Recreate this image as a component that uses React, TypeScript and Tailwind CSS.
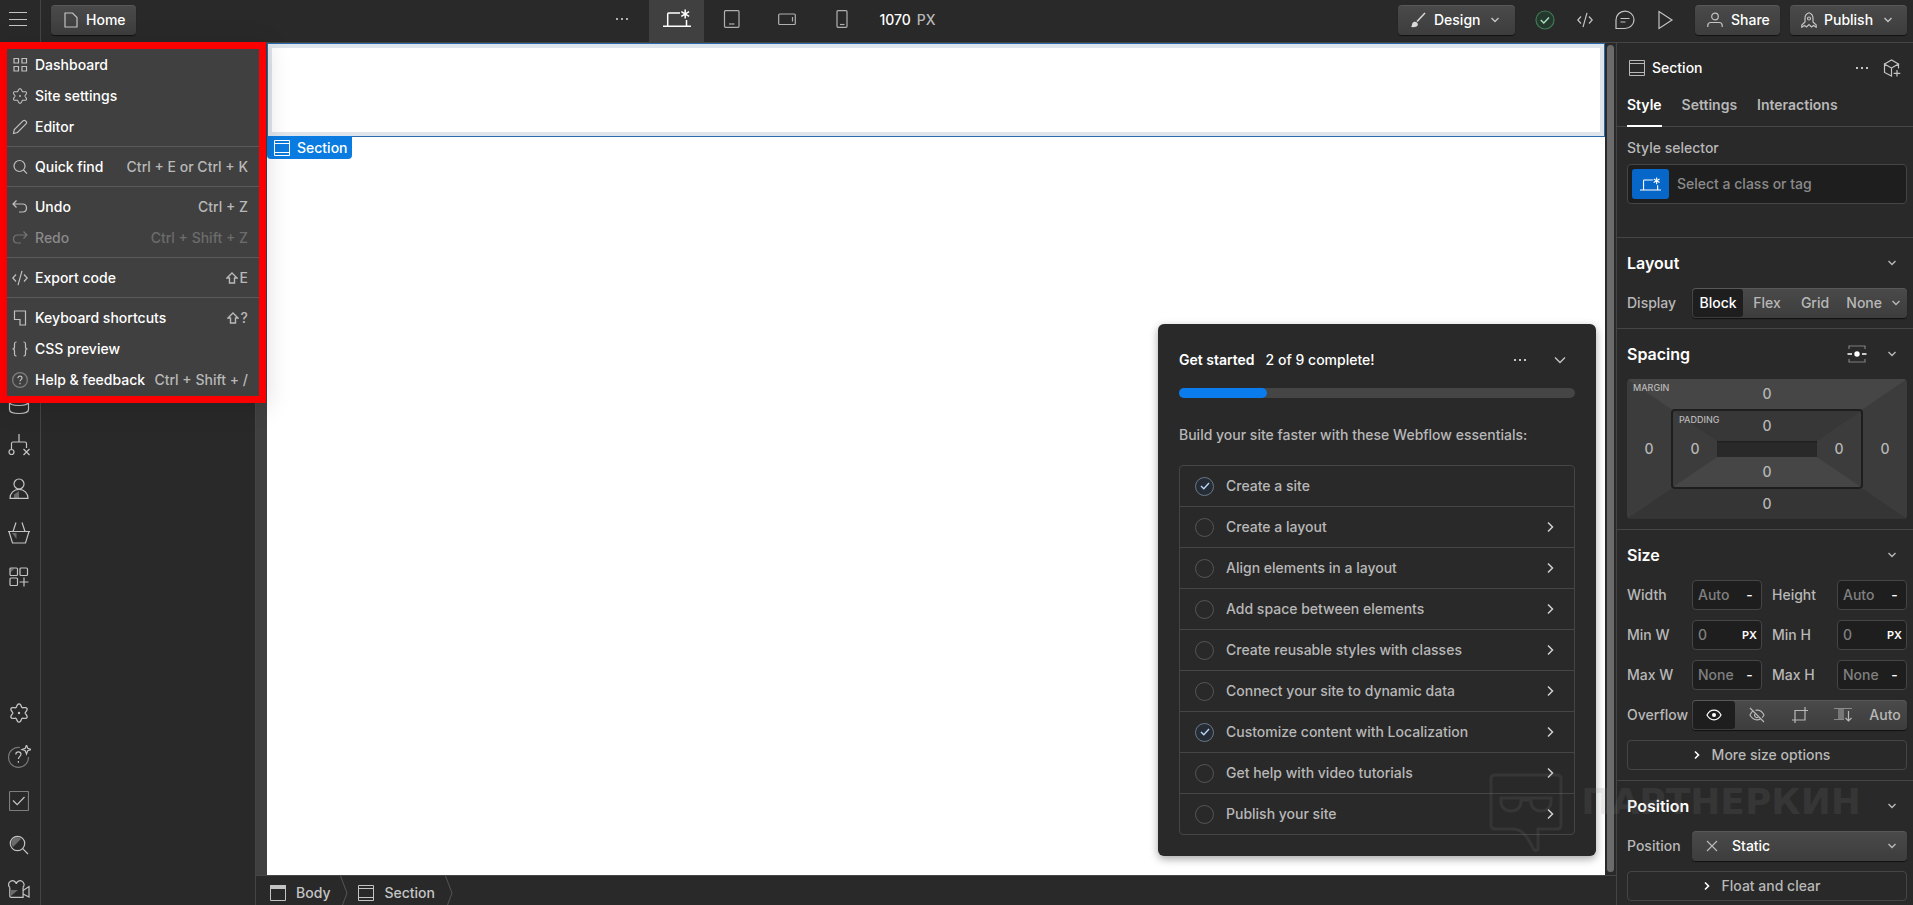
import React from "react";
import { clsx } from "clsx";

type IconProps = {
  size?: number;
  className?: string;
  children: React.ReactNode;
};

function Icon({ size = 16, className, children }: IconProps) {
  return (
    <svg
      width={size}
      height={size}
      viewBox={`0 0 ${size} ${size}`}
      fill="none"
      stroke="currentColor"
      strokeWidth="1.2"
      className={clsx("shrink-0", className)}
      aria-hidden="true"
    >
      {children}
    </svg>
  );
}

/* ---------- Icons ---------- */

const Chevron = ({ className }: { className?: string }) => (
  <Icon size={10} className={className}>
    <path d="M1.5 3 5 6.5 8.5 3" strokeWidth="1.4" />
  </Icon>
);

const ChevronRight = ({ className }: { className?: string }) => (
  <Icon size={10} className={className}>
    <path d="M3 1.5 6.5 5 3 8.5" strokeWidth="1.6" />
  </Icon>
);

const Dots = () => (
  <Icon>
    <g fill="currentColor" stroke="none">
      <rect x="2" y="7" width="2" height="2" />
      <rect x="7" y="7" width="2" height="2" />
      <rect x="12" y="7" width="2" height="2" />
    </g>
  </Icon>
);

const SectionIcon = ({ className }: { className?: string }) => (
  <Icon className={className}>
    <path d="M.5.5h15v15H.5zM.5 3.5h15M.5 12.5h15" strokeWidth="1" />
  </Icon>
);

const BodyIcon = () => (
  <Icon>
    <path d="M.5.5h15v15H.5z" strokeWidth="1" />
    <path d="M0 0h16v4H0z" fill="currentColor" stroke="none" />
  </Icon>
);

// Six rounded teeth on a 20x20 grid
const gearPoints = Array.from({ length: 72 }, (_, i) => {
  const angle = (i / 72) * Math.PI * 2;
  const r = 7.7 + 1.5 * Math.cos(6 * angle);
  return `${(10 + r * Math.sin(angle)).toFixed(2)},${(10 - r * Math.cos(angle)).toFixed(2)}`;
}).join(" ");

const GearIcon = ({ size = 16 }: { size?: number }) => (
  <svg
    width={size}
    height={size}
    viewBox="0 0 20 20"
    fill="none"
    stroke="currentColor"
    strokeWidth="1.3"
    className="shrink-0"
    aria-hidden="true"
  >
    <polygon points={gearPoints} strokeLinejoin="round" />
    <circle cx="10" cy="10" r="1.2" fill="currentColor" stroke="none" />
  </svg>
);

const CodeIcon = () => (
  <Icon>
    <path d="M4 4.5.8 8 4 11.5M12 4.5 15.2 8 12 11.5M10 .8 6 15.2" />
  </Icon>
);

const DesktopStar = ({ className }: { className?: string }) => (
  <svg
    width="28"
    height="20"
    viewBox="0 0 28 20"
    fill="none"
    stroke="currentColor"
    strokeWidth="1.5"
    className={clsx("shrink-0", className)}
    aria-hidden="true"
  >
    <path d="M0 17.3h28M4.7 17V5c0-.6.4-1 1-1H17M23.5 11v6" />
    <path d="M22.2.5v9M18.3 2.7l7.8 4.6M26.1 2.7l-7.8 4.6" />
  </svg>
);

/* ---------- Top bar ---------- */

const raised =
  "rounded-[4px] bg-linear-to-b from-[#4a4a4a] to-[#3d3d3d] shadow-[0_1px_1px_rgba(0,0,0,0.6),inset_0_1px_0_rgba(255,255,255,0.08)]";

function DeviceButton({
  label,
  active,
  children,
}: {
  label: string;
  active?: boolean;
  children: React.ReactNode;
}) {
  return (
    <button
      aria-label={label}
      className={clsx(
        "flex h-full w-[55px] items-center justify-center pb-1",
        active ? "bg-[#404040] text-white" : "text-[#b0b0b0]"
      )}
    >
      {children}
    </button>
  );
}

function ToolButton({
  label,
  children,
}: {
  label: string;
  children: React.ReactNode;
}) {
  return (
    <button
      aria-label={label}
      className="flex h-[30px] w-10 items-center justify-center text-[#c4c4c4]"
    >
      {children}
    </button>
  );
}

function TopBar() {
  return (
    <header className="flex h-[43px] shrink-0 border-b border-[#454545] bg-[#292929]">
      <div className="flex items-start">
        <button
          aria-label="Main menu"
          className="flex h-full w-[41px] items-center border-r border-[#454545] pb-1 pl-[9px] text-[#c4c4c4]"
        >
          <Icon size={18}>
            <path d="M0 2.5h18M0 9.5h18M0 15.5h18" strokeWidth="1" />
          </Icon>
        </button>
        <button
          className={clsx(
            "mt-[5px] ml-[10px] flex h-[30px] w-[85px] items-center gap-[7px] pl-3 text-white",
            raised
          )}
        >
          <Icon className="text-[#c4c4c4]">
            <path d="M2 1h7.5L14 5.5V15H2z" />
          </Icon>
          Home
        </button>
      </div>

      <div className="flex flex-1 items-start justify-center pr-1">
        <DeviceButton label="More breakpoints">
          <Dots />
        </DeviceButton>
        <DeviceButton label="Desktop" active>
          <DesktopStar />
        </DeviceButton>
        <DeviceButton label="Tablet">
          <Icon size={18}>
            <rect x="1.5" y=".7" width="14.5" height="16.6" rx="1" />
            <path d="M6 14h5.5" />
          </Icon>
        </DeviceButton>
        <DeviceButton label="Mobile landscape">
          <Icon size={18}>
            <rect x=".7" y="4" width="16.6" height="10.5" rx="1" />
            <path d="M14.5 7v4.5" />
          </Icon>
        </DeviceButton>
        <DeviceButton label="Mobile portrait">
          <Icon size={18}>
            <rect x="4" y=".7" width="10" height="16.6" rx="1" />
            <path d="M7 14.5h4.5" />
          </Icon>
        </DeviceButton>
        <span className="flex h-10 items-center gap-1.5 pl-[10px] text-white">
          1070 <span className="text-[#b8b8b8]">PX</span>
        </span>
      </div>

      <div className="flex items-start gap-[10px] pt-[5px] pr-1.5">
        <button
          className={clsx(
            "flex h-[30px] w-[117px] items-center pl-3 text-white",
            raised
          )}
        >
          <Icon className="mr-2 text-[#d9d9d9]">
            <path d="M15 1 7 9.5" strokeWidth="1.5" />
            <path
              d="M1 15c1-1 .8-2 1.3-3.5C3 9.5 5.5 9 7 10.5s1 3.7-1 4.3c-1.5.4-3.5.4-5 .2z"
              fill="currentColor"
              stroke="none"
            />
          </Icon>
          Design
          <Chevron className="mr-[15px] ml-auto text-[#c4c4c4]" />
        </button>
        <div className="flex">
          <ToolButton label="Status">
            <Icon size={20}>
              <circle cx="10" cy="10" r="9" stroke="#3f7a55" fill="#25382d" />
              <path d="m5.8 10 3 3 5.2-5.5" stroke="#a6e3be" strokeWidth="1.4" />
            </Icon>
          </ToolButton>
          <ToolButton label="Code">
            <CodeIcon />
          </ToolButton>
          <ToolButton label="Comments">
            <Icon size={20}>
              <path d="M1 18.5V10a9 8.7 0 1 1 9 8.5z" />
              <path d="M5.5 8.5h9M5.5 12h5" />
            </Icon>
          </ToolButton>
          <ToolButton label="Preview">
            <Icon size={20}>
              <path d="M4 1.5v17L17 10z" />
            </Icon>
          </ToolButton>
        </div>
        <button
          className={clsx(
            "flex h-[30px] w-[85px] items-center gap-2 pl-3 text-white",
            raised
          )}
        >
          <Icon className="text-[#c4c4c4]">
            <circle cx="8" cy="4.5" r="3.3" />
            <path d="M.8 15v-1.5c0-1.7 1.3-3 3-3h8.4c1.7 0 3 1.3 3 3V15" />
          </Icon>
          Share
        </button>
        <button
          className={clsx(
            "flex h-[30px] w-[117px] items-center pl-[11px] text-white",
            raised
          )}
        >
          <Icon className="mr-[7px] text-[#c4c4c4]">
            <path d="M4 10V6.5C4 3.8 6 1.5 8 .8c2 .7 4 3 4 5.7V10l3.2 3v2.2l-2.7-1.7-2 1.5L8 12.5 5.5 15l-2-1.5L.8 15.2V13z" />
            <circle cx="8" cy="6.5" r="1.5" />
          </Icon>
          Publish
          <Chevron className="mr-[14px] ml-auto text-[#c4c4c4]" />
        </button>
      </div>
    </header>
  );
}

/* ---------- Main menu ---------- */

type MenuEntry = {
  label: string;
  keys?: string;
  shift?: boolean;
  disabled?: boolean;
  icon: React.ReactNode;
};

const menuGroups: MenuEntry[][] = [
  [
    {
      label: "Dashboard",
      icon: (
        <Icon>
          <path d="M2 1.5h4.5V6H2zM10 1.5h4.5V6H10zM2 9.5h4.5V14H2zM10 9.5h4.5V14H10z" />
        </Icon>
      ),
    },
    { label: "Site settings", icon: <GearIcon /> },
    {
      label: "Editor",
      icon: (
        <Icon>
          <path d="m1.5 14.5.8-4L11 1.8c.7-.7 1.8-.7 2.5 0l.5.5c.7.7.7 1.8 0 2.5l-8.5 8.7z" />
        </Icon>
      ),
    },
  ],
  [
    {
      label: "Quick find",
      keys: "Ctrl + E or Ctrl + K",
      icon: (
        <Icon>
          <circle cx="7.5" cy="7" r="5.5" />
          <path d="m11.500 11 3.500 3.700" />
        </Icon>
      ),
    },
  ],
  [
    {
      label: "Undo",
      keys: "Ctrl + Z",
      icon: (
        <Icon>
          <path d="M4.5 1.5 1 5l3.5 3.5M1 5h9.500c2.500 0 4 1.500 4 4s-1.500 4-4 4H7" />
        </Icon>
      ),
    },
    {
      label: "Redo",
      keys: "Ctrl + Shift + Z",
      disabled: true,
      icon: (
        <Icon>
          <path d="M11.5 1.5 15 5l-3.5 3.5M15 5H5.5c-2.500 0-4 1.500-4 4s1.500 4 4 4H9" />
        </Icon>
      ),
    },
  ],
  [{ label: "Export code", keys: "E", shift: true, icon: <CodeIcon /> }],
  [
    {
      label: "Keyboard shortcuts",
      keys: "?",
      shift: true,
      icon: (
        <Icon>
          <path d="M2.5 1h11v14H8V9.500H2.500z" />
        </Icon>
      ),
    },
    {
      label: "CSS preview",
      icon: (
        <Icon>
          <path d="M4.5 1H4C2.800 1 2.500 1.800 2.500 3v3C2.500 7.300 1.800 8 .5 8c1.300 0 2 .7 2 2v3c0 1.200.3 2 1.500 2h.5M11.500 1h.5c1.200 0 1.500.8 1.500 2v3c0 1.300.7 2 2 2-1.300 0-2 .7-2 2v3c0 1.200-.3 2-1.500 2h-.5" />
        </Icon>
      ),
    },
    {
      label: "Help & feedback",
      keys: "Ctrl + Shift + /",
      icon: (
        <Icon>
          <circle cx="8" cy="8" r="7.4" opacity=".5" />
          <path d="M6 6.200c0-1.300.9-2 2-2s2 .8 2 1.900c0 1.500-2 1.600-2 3.200M8 10.800v1.400" />
        </Icon>
      ),
    },
  ],
];

function MainMenu() {
  return (
    <nav
      aria-label="Main menu"
      className="absolute top-[42px] left-0 z-20 w-[266px] border-[7px] border-[#fb0000] bg-[#404040] pb-px shadow-[0_4px_24px_rgba(0,0,0,0.15)]"
    >
      {menuGroups.map((group, i) => (
        <div
          key={i}
          className={clsx(i > 0 && "mt-1 border-t border-[#5a5a5a] pt-1")}
        >
          {group.map((item) => (
            <button
              key={item.label}
              disabled={item.disabled}
              className={clsx(
                "flex h-[31px] w-full items-center pr-[11px] pl-[5px] whitespace-nowrap",
                item.disabled ? "text-[#8a8a8a]" : "text-white"
              )}
            >
              <span
                className={clsx(
                  "mr-[7px]",
                  item.disabled ? "text-[#757575]" : "text-[#c0c0c0]"
                )}
              >
                {item.icon}
              </span>
              {item.label}
              {item.keys && (
                <span
                  className={clsx(
                    "ml-auto flex items-center gap-0.5",
                    item.disabled ? "text-[#6c6c6c]" : "text-[#b8b8b8]"
                  )}
                >
                  {item.shift && (
                    <Icon size={12}>
                      <path d="M6 1 1 6h2.500v5h5V6H11z" strokeWidth="1.4" />
                    </Icon>
                  )}
                  {item.keys}
                </span>
              )}
            </button>
          ))}
        </div>
      ))}
    </nav>
  );
}

/* ---------- Left rail ---------- */

const railTop = [
  {
    label: "CMS",
    icon: (
      <Icon size={28}>
        <ellipse cx="14" cy="9" rx="9.5" ry="4" />
        <path d="M4.500 9v13.500c0 2.500 4 4 9.500 4s9.500-1.500 9.500-4V9" />
        <path d="M4.500 15c0 2 4 3.500 9.500 3.500s9.500-1.500 9.500-3.500" />
      </Icon>
    ),
  },
  {
    label: "Logic",
    icon: (
      <Icon size={22}>
        <path d="M11 0v8M3.500 15V9.500c0-.8.500-1.500 1.500-1.500h12c1 0 1.500.7 1.500 1.500V14" />
        <circle cx="3.5" cy="18" r="2.5" />
        <path d="m15.500 15 6 6M21.500 15l-6 6" />
      </Icon>
    ),
  },
  {
    label: "Users",
    icon: (
      <Icon size={22}>
        <path d="M6 20v-3.500L11 13v7z" fill="#6b6b6b" stroke="none" />
        <circle cx="11" cy="6" r="5" />
        <path d="M2 20.400c0-5.500 4-9 9-9s9 3.500 9 9z" />
      </Icon>
    ),
  },
  {
    label: "Ecommerce",
    icon: (
      <Icon size={22}>
        <path d="M4 11h4.500v6z" fill="#6b6b6b" stroke="none" />
        <path d="M0 9.500h22M1 9.500l3.500 11.500h13L21 9.500M8 .5 5 9.500M14 .5l3 9" />
      </Icon>
    ),
  },
  {
    label: "Apps",
    icon: (
      <Icon size={20}>
        <path d="M1.500 1.500h4l-4 4z" fill="#6b6b6b" stroke="none" />
        <rect x="1" y="1" width="7.5" height="7.5" rx="1" />
        <rect x="11" y="1" width="7.5" height="7.5" rx="1" />
        <rect x="1" y="11" width="7.5" height="7.5" rx="1" />
        <path d="M15 10.500v9M10.500 15h9" />
      </Icon>
    ),
  },
];

const railBottom = [
  { label: "Settings", icon: <GearIcon size={20} /> },
  {
    label: "Help",
    icon: (
      <Icon size={24}>
        <path d="M13 2.500A10 10 0 1 0 21.500 12" opacity=".5" />
        <path d="M8.800 9.500c0-1.700 1-2.700 2.600-2.700S14 7.900 14 9.200c0 2-2.600 2.300-2.600 4.800M11.400 16v1.800" />
        <path d="m19.500 0 1.200 3.300L24 4.500l-3.300 1.200L19.500 9l-1.200-3.300L15 4.500l3.300-1.200z" />
      </Icon>
    ),
  },
  {
    label: "Audit",
    icon: (
      <Icon size={20}>
        <rect x=".5" y=".5" width="19" height="19" rx="1" opacity=".55" />
        <path d="m4 9.500 4.200 4.200L15.500 6" />
      </Icon>
    ),
  },
  {
    label: "Search",
    icon: (
      <Icon size={20}>
        <path d="M4 12a5.500 5.500 0 0 1 8-8z" fill="#6b6b6b" stroke="none" />
        <circle cx="8.5" cy="8.5" r="7.2" />
        <path d="m13.700 13.700 5.300 5.300" />
      </Icon>
    ),
  },
  {
    label: "Video tutorials",
    icon: (
      <Icon size={22}>
        <path d="M3 12h7l-7 6z" fill="#6b6b6b" stroke="none" />
        <path d="M1.800 9.500v8.500c0 .8.500 1.300 1.300 1.300h12V9.500" />
        <path d="M1.800 9.500a3.900 3.900 0 1 1 6.500-3.500 3.900 3.900 0 1 1 6.500 3.500M15 12.500l6-4v10.500l-6-3" />
      </Icon>
    ),
  },
];

function RailButton({
  label,
  children,
}: {
  label: string;
  children: React.ReactNode;
}) {
  return (
    <button
      aria-label={label}
      className="flex h-11 w-[38px] shrink-0 items-center justify-center"
    >
      {children}
    </button>
  );
}

function LeftRail() {
  return (
    <aside className="flex w-[41px] shrink-0 flex-col overflow-hidden border-r border-[#454545] bg-[#292929] text-[#c4c4c4]">
      <div className="flex flex-1 flex-col pt-[336px]">
        {railTop.map((item) => (
          <RailButton key={item.label} label={item.label}>
            {item.icon}
          </RailButton>
        ))}
      </div>
      <div className="-mb-1.5 flex flex-col">
        {railBottom.map((item) => (
          <RailButton key={item.label} label={item.label}>
            {item.icon}
          </RailButton>
        ))}
      </div>
    </aside>
  );
}

/* ---------- Get started card ---------- */

const tasks = [
  { label: "Create a site", done: true, link: false },
  { label: "Create a layout", done: false, link: true },
  { label: "Align elements in a layout", done: false, link: true },
  { label: "Add space between elements", done: false, link: true },
  { label: "Create reusable styles with classes", done: false, link: true },
  { label: "Connect your site to dynamic data", done: false, link: true },
  { label: "Customize content with Localization", done: true, link: true },
  { label: "Get help with video tutorials", done: false, link: true },
  { label: "Publish your site", done: false, link: true },
];

function GetStarted() {
  const done = tasks.filter((t) => t.done).length;

  return (
    <section className="absolute right-[9px] bottom-[19px] w-[438px] rounded-md bg-[#292929] p-[21px] text-[#b8b8b8] shadow-[0_3px_8px_rgba(0,0,0,0.35)]">
      <div className="flex h-[30px] items-center text-white">
        <h2 className="mr-[11px] font-semibold">Get started</h2>
        <span>
          {done} of {tasks.length} complete!
        </span>
        <button aria-label="More" className="ml-auto p-3 text-[#c4c4c4]">
          <Dots />
        </button>
        <button aria-label="Collapse" className="py-2 pr-[7px] pl-3 text-[#c4c4c4]">
          <Icon>
            <path d="m3 5.500 5 5 5-5" strokeWidth="1.4" />
          </Icon>
        </button>
      </div>
      <div className="mt-[13px] h-[10px] rounded-full bg-[#454545]">
        <div
          className="h-full rounded-full bg-[#0a7cee]"
          style={{ width: `${(done / tasks.length) * 100}%` }}
        />
      </div>
      <p className="mt-[27px] leading-5">
        Build your site faster with these Webflow essentials:
      </p>
      <ul className="mt-5 rounded-[4px] border border-[#454545]">
        {tasks.map((task, i) => (
          <li
            key={task.label}
            className={clsx(
              "flex items-center pr-[18px] pl-[15px]",
              i === 0 ? "h-10" : "h-[41px] border-t border-[#454545]"
            )}
          >
            <label className="flex items-center gap-3">
              <span className="grid place-items-center">
                <input
                  type="checkbox"
                  defaultChecked={task.done}
                  className="col-start-1 row-start-1 size-[19px] appearance-none rounded-full border border-[#555555] checked:border-[#6b7888] checked:bg-[#252c36]"
                />
                {task.done && (
                  <Icon size={10} className="col-start-1 row-start-1 text-[#b9d6f8]">
                    <path d="m1 5 2.800 2.800L9 2" strokeWidth="1.4" />
                  </Icon>
                )}
              </span>
              {task.label}
            </label>
            {task.link && (
              <button
                aria-label={`Open ${task.label}`}
                className="ml-auto text-[#d0d0d0]"
              >
                <Icon size={12}>
                  <path d="m4 1.500 4.500 4.500L4 10.500" strokeWidth="1.5" />
                </Icon>
              </button>
            )}
          </li>
        ))}
      </ul>
    </section>
  );
}

/* ---------- Canvas ---------- */

function Canvas() {
  return (
    <main className="flex min-w-0 flex-1 flex-col bg-[#292929]">
      <div className="flex min-h-0 flex-1">
        <div className="w-[11px] shrink-0 bg-[#404040]" />
        <div className="relative min-w-0 flex-1 bg-white">
          <div className="h-[94px] border border-[#2a6cab]">
            <div className="h-full border-4 border-[#dfe5ec]" />
          </div>
          <span className="-mt-px flex h-[23px] w-[85px] items-center gap-[7px] rounded-b-[4px] bg-[#0a7be0] pl-[7px] text-white">
            <SectionIcon />
            Section
          </span>
          <GetStarted />
        </div>
        <div className="flex w-[11px] shrink-0 bg-[#292929] px-0.5 pt-0.5 pb-[3px]">
          <div className="w-[7px] rounded-full bg-[#6b6b6b]" />
        </div>
      </div>
      <nav
        aria-label="Breadcrumbs"
        className="flex h-[30px] shrink-0 items-center border-t border-[#454545] text-[#c4c4c4]"
      >
        <a href="#body" className="flex items-center gap-[10px] pt-[5px] pl-[14px]">
          <BodyIcon />
          Body
        </a>
        <Crumb />
        <a href="#section" className="flex items-center gap-[10px] pt-[5px]">
          <SectionIcon />
          Section
        </a>
        <Crumb />
      </nav>
    </main>
  );
}

function Crumb() {
  return (
    <svg
      width="8"
      height="29"
      viewBox="0 0 8 29"
      fill="none"
      stroke="#555555"
      className="mx-[10px]"
      aria-hidden="true"
    >
      <path d="M.5 0 7 17 2.500 29" />
    </svg>
  );
}

/* ---------- Style panel ---------- */

function PanelSection({
  title,
  extra,
  children,
}: {
  title: string;
  extra?: React.ReactNode;
  children: React.ReactNode;
}) {
  return (
    <section className="border-t border-[#454545] pr-1.5 pb-[10px] pl-[10px]">
      <div className="flex h-[50px] items-center justify-between pr-[10px]">
        <h3 className="text-base font-semibold text-white">{title}</h3>
        <div className="flex items-center gap-5">
          {extra}
          <button aria-label={`Toggle ${title}`}>
            <Chevron />
          </button>
        </div>
      </div>
      {children}
    </section>
  );
}

/* One ring of the box model: four bevelled sides around whatever sits in the middle. */
function BoxRing({
  name,
  top,
  bottom,
  className,
  children,
}: {
  name: string;
  top: string;
  bottom: string;
  className?: string;
  children: React.ReactNode;
}) {
  return (
    <div
      className={clsx(
        "relative grid grid-cols-[44px_1fr_44px] grid-rows-[30px_minmax(0,1fr)_30px] overflow-hidden rounded-[4px] bg-[#3c3c3c] leading-4",
        className
      )}
    >
      <span className="absolute top-[3px] left-1.5 z-10 text-[9px] leading-3">
        {name}
      </span>
      <button
        className={clsx(
          "col-span-3 [clip-path:polygon(0_0,100%_0,calc(100%-44px)_100%,44px_100%)]",
          top
        )}
      >
        0
      </button>
      <button>0</button>
      {children}
      <button>0</button>
      <button
        className={clsx(
          "col-span-3 [clip-path:polygon(44px_0,calc(100%-44px)_0,100%_100%,0_100%)]",
          bottom
        )}
      >
        0
      </button>
    </div>
  );
}

const sizeFields = [
  { label: "Width", placeholder: "Auto", unit: "-" },
  { label: "Height", placeholder: "Auto", unit: "-" },
  { label: "Min W", placeholder: "0", unit: "PX" },
  { label: "Min H", placeholder: "0", unit: "PX" },
  { label: "Max W", placeholder: "None", unit: "-" },
  { label: "Max H", placeholder: "None", unit: "-" },
];

function SizeField({ label, placeholder, unit }: (typeof sizeFields)[number]) {
  const id = label.toLowerCase().replace(" ", "-");

  return (
    <div className="flex items-center">
      <label htmlFor={id} className="w-[65px] shrink-0">
        {label}
      </label>
      <div className="flex h-[30px] min-w-0 flex-1 items-center rounded-[4px] border border-[#454545] bg-[#1e1e1e] pl-[5px]">
        <input
          id={id}
          placeholder={placeholder}
          className="w-full min-w-0 bg-transparent placeholder:text-[#808080]"
        />
        <button
          className={clsx(
            "shrink-0 pr-1 text-white",
            unit === "-" ? "w-[19px]" : "text-[11px] font-semibold"
          )}
        >
          {unit}
        </button>
      </div>
    </div>
  );
}

function StylePanel() {
  return (
    <aside className="w-[297px] shrink-0 overflow-hidden border-l border-[#454545] bg-[#292929] text-[#b8b8b8]">
      <div className="flex h-[50px] items-center pr-3 pl-3 text-white">
        <SectionIcon className="mr-[7px] text-[#b8b8b8]" />
        Section
        <button aria-label="More" className="mr-[13px] ml-auto text-[#c4c4c4]">
          <Dots />
        </button>
        <button aria-label="Create component" className="text-[#c4c4c4]">
          <Icon size={18}>
            <path d="M8.500 17V9L1.500 5v8.500zM1.500 5l7-4 7 4-7 4M15.500 5v4.500M14 11v6.500M10.700 14.300h6.600" />
          </Icon>
        </button>
      </div>

      <div className="flex h-[34px] gap-5 border-b border-[#454545] pl-[10px] font-semibold">
        <button className="h-[34px] border-b-2 border-white pb-[9px] text-white">
          Style
        </button>
        <button className="h-[34px] pb-[11px]">Settings</button>
        <button className="h-[34px] pb-[11px]">Interactions</button>
      </div>

      <div className="h-[110px] pt-[11px] pr-1.5 pl-[10px]">
        <label htmlFor="selector" className="block leading-5">
          Style selector
        </label>
        <div className="mt-1.5 flex h-10 items-center gap-2 rounded-[4px] border border-[#454545] bg-[#1e1e1e] pl-1">
          <button
            aria-label="Breakpoint"
            className="flex h-[30px] w-[37px] shrink-0 items-center justify-center rounded-[3px] bg-[#0667c9] text-white"
          >
            <DesktopStar className="h-[15px] w-[21px]" />
          </button>
          <input
            id="selector"
            placeholder="Select a class or tag"
            className="w-full bg-transparent placeholder:text-[#8a8a8a]"
          />
        </div>
      </div>

      <PanelSection title="Layout">
        <div className="flex h-[30px] items-center">
          <span className="w-[65px]">Display</span>
          <div className={clsx("flex h-[30px] flex-1 items-center p-px", raised)}>
            <button className="h-7 w-[50px] rounded-[3px] bg-[#1e1e1e] text-white">
              Block
            </button>
            <button className="w-12">Flex</button>
            <button className="w-12">Grid</button>
            <button className="flex flex-1 items-center justify-end gap-[9px] pr-[5px]">
              None
              <Chevron />
            </button>
          </div>
        </div>
      </PanelSection>

      <PanelSection
        title="Spacing"
        extra={
          <button aria-label="Spacing mode">
            <Icon size={20}>
              <path d="M2 5V2h16v3M2 15v3h16v-3" opacity=".6" />
              <path d="M.5 10H5M15 10h4.500" stroke="#fff" strokeWidth="1.5" />
              <circle cx="10" cy="10" r="2.7" fill="#fff" stroke="none" />
            </Icon>
          </button>
        }
      >
        <BoxRing
          name="MARGIN"
          top="bg-[#464646]"
          bottom="bg-[#353535]"
          className="h-[140px]"
        >
          <BoxRing
            name="PADDING"
            top="bg-[#373737]"
            bottom="bg-[#464646]"
            className="border-2 border-[#1e1e1e]"
          >
            <div className="bg-[#292929] shadow-[inset_0_1px_1px_#1e1e1e]" />
          </BoxRing>
        </BoxRing>
      </PanelSection>

      <PanelSection title="Size">
        <div className="grid grid-cols-2 gap-[10px]">
          {sizeFields.map((field) => (
            <SizeField key={field.label} {...field} />
          ))}
        </div>
        <div className="mt-[10px] flex h-[30px] items-center">
          <span className="w-[65px]">Overflow</span>
          <div className={clsx("flex h-[30px] flex-1 items-center p-px", raised)}>
            <button
              aria-label="Visible"
              className="flex h-7 w-[42px] items-center justify-center rounded-[3px] bg-[#1e1e1e] text-white"
            >
              <Icon>
                <path d="M1 8c1.500-3 4-4.800 7-4.800S13.500 5 15 8c-1.500 3-4 4.800-7 4.800S2.500 11 1 8z" />
                <circle cx="8" cy="8" r="2" fill="currentColor" stroke="none" />
              </Icon>
            </button>
            <button aria-label="Hidden" className="flex w-[43px] justify-center">
              <Icon>
                <path d="M1 1l14 14M4.500 3.500C3 4.500 1.800 6 1 8c1.500 3 4 4.800 7 4.800 1.200 0 2.300-.3 3.300-.8M6.500 3.300C7 3.200 7.500 3.200 8 3.200c3 0 5.500 1.800 7 4.800-.5 1-1.100 1.900-1.900 2.600" />
                <path d="M5.800 7a2.500 2.500 0 0 0 3.400 3.300" />
              </Icon>
            </button>
            <button aria-label="Clip" className="flex w-[43px] justify-center">
              <Icon>
                <path d="M0 13h13V0M3 16V3.500h13" />
              </Icon>
            </button>
            <button aria-label="Scroll" className="flex w-[43px] justify-center">
              <Icon size={18}>
                <path d="M4 3h6v10H4z" fill="#777777" stroke="none" />
                <path d="M0 2.500h18M0 13.500h10" opacity=".6" />
                <path d="M14.500 5v10M11.500 12l3 3 3-3" />
              </Icon>
            </button>
            <button className="flex-1">Auto</button>
          </div>
        </div>
        <DisclosureButton label="More size options" />
      </PanelSection>

      <PanelSection title="Position">
        <div className="flex h-[30px] items-center">
          <label htmlFor="position" className="w-[65px]">
            Position
          </label>
          <div
            className={clsx(
              "grid h-[30px] flex-1 grid-cols-[40px_1fr_30px] items-center",
              raised
            )}
          >
            <Icon size={12} className="col-start-1 row-start-1 ml-[14px]">
              <path d="m1 1 10 10M11 1 1 11" />
            </Icon>
            <select
              id="position"
              className="col-span-3 col-start-1 row-start-1 h-full appearance-none bg-transparent pl-10 text-white"
            >
              <option>Static</option>
            </select>
            <Chevron className="pointer-events-none col-start-3 row-start-1 ml-[10px]" />
          </div>
        </div>
        <DisclosureButton label="Float and clear" />
      </PanelSection>
    </aside>
  );
}

function DisclosureButton({ label }: { label: string }) {
  return (
    <button className="mt-[10px] flex h-[30px] w-full items-center justify-center gap-[10px] rounded-[4px] border border-[#454545] pr-3">
      <ChevronRight className="text-white" />
      {label}
    </button>
  );
}

function Watermark() {
  return (
    <div className="pointer-events-none absolute right-[52px] bottom-[52px] z-30 flex items-start gap-[18px] text-[#808080] opacity-15">
      <svg
        width="74"
        height="80"
        viewBox="0 0 74 80"
        fill="none"
        stroke="currentColor"
        strokeWidth="3"
        aria-hidden="true"
      >
        <path d="M6 2h62c2.500 0 4 1.500 4 4v46c0 2.500-1.500 4-4 4H49v20c-1 2-3 2-4.500 0C40 67 35 56 24 56H6c-2.500 0-4-1.500-4-4V6c0-2.500 1.500-4 4-4z" />
        <path d="M12 25h50v4c0 12-20 12-20 0v-2H32v2c0 12-20 12-20 0z" />
      </svg>
      <span className="mt-[7px] font-['DejaVu_Sans',sans-serif] text-[36px] leading-[44px] font-bold">
        ПАРТНЕРКИН
      </span>
    </div>
  );
}

export default function App() {
  return (
    <div className="relative flex h-screen flex-col overflow-hidden bg-[#292929] font-['Inter',sans-serif] text-sm leading-5 font-medium">
      <TopBar />
      <MainMenu />
      <div className="flex min-h-0 flex-1">
        <LeftRail />
        <div className="w-[215px] shrink-0 border-r border-[#454545] bg-[#292929]" />
        <Canvas />
        <StylePanel />
      </div>
      <Watermark />
    </div>
  );
}
